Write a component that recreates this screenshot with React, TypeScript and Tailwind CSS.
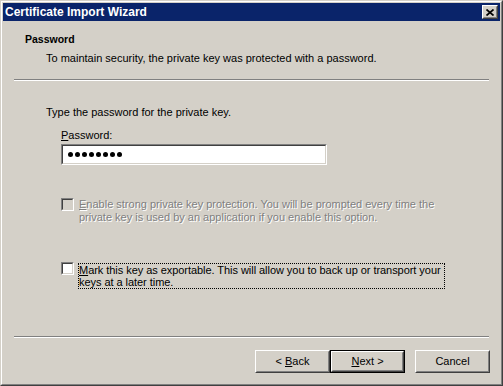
import React from 'react';

const face = "font-['Liberation_Sans',Arial,sans-serif]";

function Separator({ className = '' }: { className?: string }) {
  return <div className={`h-[2px] w-[475px] border-t border-b border-t-[#808080] border-b-white ${className}`} />;
}

function Checkbox({ disabled }: { disabled?: boolean }) {
  return (
    <div className="w-[13px] h-[13px] shrink-0 border border-t-[#808080] border-l-[#808080] border-b-white border-r-white">
      <div
        className={`w-full h-full border border-t-[#404040] border-l-[#404040] border-b-[#d4d0c8] border-r-[#d4d0c8] ${
          disabled ? 'bg-[#d4d0c8]' : 'bg-white'
        }`}
      />
    </div>
  );
}

function WinButton({ children, isDefault }: { children: React.ReactNode; isDefault?: boolean }) {
  return (
    <div className={`w-[75px] h-[23px] bg-[#d4d0c8] ${isDefault ? 'border border-black' : ''}`}>
      <div className="w-full h-full border border-t-white border-l-white border-b-[#404040] border-r-[#404040]">
        <div className="w-full h-full flex items-center justify-center border border-t-[#d4d0c8] border-l-[#d4d0c8] border-b-[#808080] border-r-[#808080] text-[11px] text-black">
          <span className="whitespace-pre">{children}</span>
        </div>
      </div>
    </div>
  );
}

export default function App() {
  return (
    <div className={`w-[503px] h-[386px] bg-[#d4d0c8] ${face} text-[11px] text-black`}>
      {/* window frame */}
      <div className="w-full h-full border border-t-[#d4d0c8] border-l-[#d4d0c8] border-b-[#404040] border-r-[#404040]">
        <div className="w-full h-full border border-t-white border-l-white border-b-[#808080] border-r-[#808080] p-[1px] flex flex-col">
          {/* Title bar */}
          <div className="h-[18px] bg-[#0a246a] flex items-center justify-between pl-[2px] pr-[2px] shrink-0">
            <span className="text-white font-bold text-[12px] leading-[18px]">Certificate Import Wizard</span>
            <div className="w-[16px] h-[14px] bg-[#d4d0c8] border border-t-white border-l-white border-b-[#404040] border-r-[#404040]">
              <div className="w-full h-full flex items-center justify-center border border-t-[#d4d0c8] border-l-[#d4d0c8] border-b-[#808080] border-r-[#808080]">
                <svg width="8" height="7" viewBox="0 0 8 7">
                  <path d="M0.5 0.5 L7.5 6.5 M7.5 0.5 L0.5 6.5" stroke="black" strokeWidth="1.7" />
                </svg>
              </div>
            </div>
          </div>

          {/* Header */}
          <div className="mt-[12px] pl-[22px] font-bold text-[10.5px] leading-[13px]">Password</div>
          <div className="mt-[6px] pl-[43px] leading-[13px]">
            To maintain security, the private key was protected with a password.
          </div>
          <Separator className="mt-[14px] ml-[11px]" />

          {/* Content */}
          <div className="mt-[25px] pl-[43px] leading-[13px]">Type the password for the private key.</div>
          <div className="mt-[10px] pl-[58px] leading-[13px]">
            <u>P</u>assword:
          </div>
          <div className="mt-[2px] ml-[58px] w-[266px] h-[21px] border border-t-[#808080] border-l-[#808080] border-b-white border-r-white">
            <div className="w-full h-full bg-white border border-t-[#404040] border-l-[#404040] border-b-[#d4d0c8] border-r-[#d4d0c8] flex items-center gap-[2px] pl-[5px]">
              {Array.from({ length: 8 }).map((_, i) => (
                <span key={i} className="w-[5px] h-[5px] rounded-full bg-black" />
              ))}
            </div>
          </div>

          <div className="mt-[33px] ml-[58px] flex gap-[5px]">
            <Checkbox disabled />
            <div className="leading-[13px] whitespace-nowrap text-[#808080] [text-shadow:1px_1px_0_#ffffff]">
              <u>E</u>nable strong private key protection. You will be prompted every time the
              <br />
              private key is used by an application if you enable this option.
            </div>
          </div>

          <div className="mt-[38px] ml-[58px] flex gap-[4px]">
            <Checkbox />
            <div className="mt-[1px] w-[367px] h-[26px] border border-dotted border-black leading-[12px] whitespace-nowrap tracking-[-0.05px]">
              <u>M</u>ark this key as exportable. This will allow you to back up or transport your
              <br />
              keys at a later time.
            </div>
          </div>

          <Separator className="mt-[47px] ml-[11px]" />

          {/* Buttons */}
          <div className="mt-[12px] flex justify-end pr-[10px]">
            <WinButton>
              {'< '}
              <u>B</u>ack
            </WinButton>
            <WinButton isDefault>
              <u>N</u>ext{' >'}
            </WinButton>
            <div className="ml-[10px]">
              <WinButton>Cancel</WinButton>
            </div>
          </div>
        </div>
      </div>
    </div>
  );
}
